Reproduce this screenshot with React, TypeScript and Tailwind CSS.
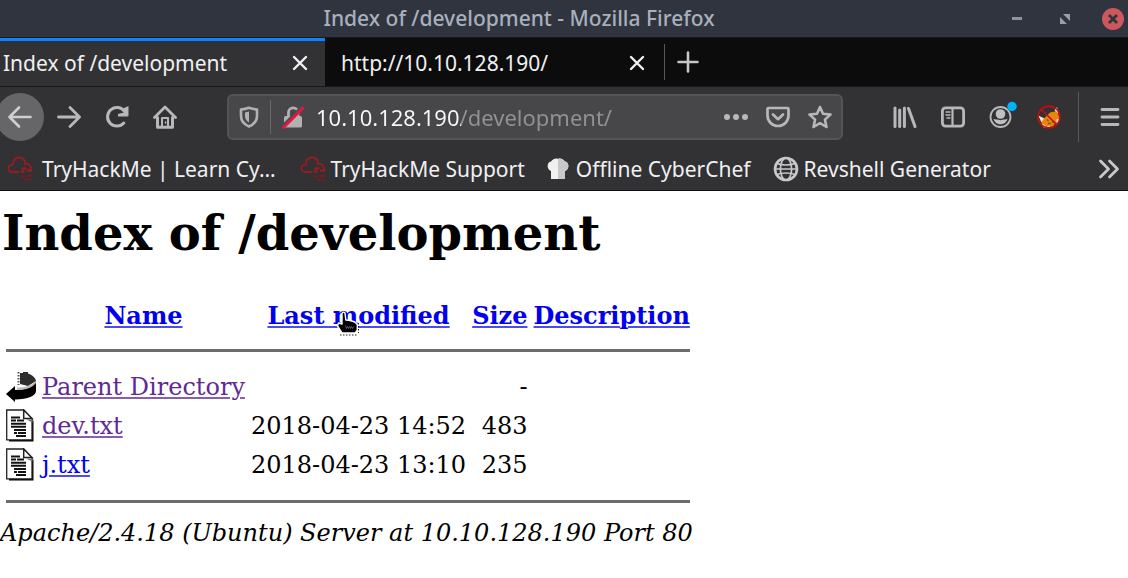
import React from "react";

type IconProps = { className?: string };

function CloseIcon({ className = "" }: IconProps) {
  return (
    <svg viewBox="0 0 16 16" className={`size-4 ${className}`} fill="none" stroke="currentColor" strokeWidth="2.4" strokeLinecap="round" aria-hidden="true">
      <path d="M2 2l12 12M14 2L2 14" />
    </svg>
  );
}

function BackIcon() {
  return (
    <svg viewBox="0 0 24 24" className="size-6" fill="none" stroke="currentColor" strokeWidth="2.6" strokeLinecap="round" strokeLinejoin="round" aria-hidden="true">
      <path d="M22.500 12H1.5M11 2.5L1.5 12l9.500 9.500" />
    </svg>
  );
}

function ForwardIcon() {
  return (
    <svg viewBox="0 0 24 24" className="size-6" fill="none" stroke="currentColor" strokeWidth="2.8" strokeLinecap="round" strokeLinejoin="round" aria-hidden="true">
      <path d="M1.500 12h21M13 2.500L22.500 12 13 21.500" />
    </svg>
  );
}

function ReloadIcon() {
  return (
    <svg viewBox="0 0 24 24" className="size-6" fill="none" aria-hidden="true">
      <path d="M19.500 6.500A9.300 9.300 0 1 0 18.800 18" stroke="currentColor" strokeWidth="3" strokeLinecap="round" />
      <path d="M23.500 1v9.500a1 1 0 0 1-1 1H13V9l6-1.500V3z" fill="currentColor" />
    </svg>
  );
}

function HomeIcon() {
  return (
    <svg viewBox="0 0 24 24" className="size-6" fill="none" stroke="currentColor" strokeLinecap="round" strokeLinejoin="round" aria-hidden="true">
      <path d="M1.500 12.500L12 2l10.500 10.500" strokeWidth="2.800" />
      <path d="M4.500 12.500V22.300h15v-9.800" strokeWidth="3" />
      <path d="M9 22v-9h6v9" strokeWidth="2" />
      <path d="M12.600 17v1" strokeWidth="1.600" />
    </svg>
  );
}

function ShieldIcon() {
  return (
    <svg viewBox="0 0 20 22" className="h-[22px] w-5 shrink-0" aria-hidden="true">
      <path d="M2 3.500Q6 3.200 10 1.800 14 3.200 18 3.500V10c0 5-3.500 8.500-8 10.500C5.500 18.500 2 15 2 10z" fill="none" stroke="#b1b1b3" strokeWidth="2.600" strokeLinejoin="round" />
      <path d="M10 5.500v11C7.500 15 6 13 6 10V6.500z" fill="#b1b1b3" />
    </svg>
  );
}

function InsecureIcon() {
  return (
    <svg viewBox="0 0 22 24" className="h-6 w-[22px] shrink-0" fill="none" aria-hidden="true">
      <path d="M6.500 12V7.500a4.700 4.700 0 0 1 9.400 0V12" stroke="#b1b1b3" strokeWidth="2.800" />
      <rect x="2" y="11" width="18" height="11.500" rx="1.500" fill="#b1b1b3" />
      <path d="M1 20.500L20.500 1" stroke="#4a4a4c" strokeWidth="2.500" />
      <path d="M1.500 22.500L21 3" stroke="#e6173f" strokeWidth="3" strokeLinecap="round" />
    </svg>
  );
}

function DotsIcon() {
  return (
    <svg viewBox="0 0 24 6" className="h-[6px] w-6" fill="currentColor" aria-hidden="true">
      <circle cx="3" cy="3" r="3" />
      <circle cx="12" cy="3" r="3" />
      <circle cx="21" cy="3" r="3" />
    </svg>
  );
}

function PocketIcon() {
  return (
    <svg viewBox="0 0 24 22" className="h-[22px] w-6" fill="none" stroke="currentColor" strokeWidth="2.700" strokeLinecap="round" strokeLinejoin="round" aria-hidden="true">
      <path d="M2.500 2h19a1 1 0 0 1 1 1v6.500a10.500 10.500 0 0 1-21 0V3a1 1 0 0 1 1-1z" />
      <path d="M7 8.500l5 4.700 5-4.700" />
    </svg>
  );
}

function StarIcon() {
  return (
    <svg viewBox="0 0 24 24" className="size-6" fill="none" stroke="currentColor" strokeWidth="2.600" strokeLinejoin="round" aria-hidden="true">
      <path d="M12 2l3 6.800 7.500.8-5.600 5 1.600 7.400-6.500-3.800L5.500 22l1.600-7.400-5.600-5 7.500-.8z" />
    </svg>
  );
}

function LibraryIcon() {
  return (
    <svg viewBox="0 0 24 22" className="h-[22px] w-6" stroke="currentColor" strokeWidth="3" strokeLinecap="round" aria-hidden="true">
      <path d="M2 2v18.500M6.700 4v16.500M11.400 2v18.500M15.500 2.500L22 20.500" />
    </svg>
  );
}

function SidebarIcon() {
  return (
    <svg viewBox="0 0 24 22" className="h-[22px] w-6" fill="none" stroke="currentColor" aria-hidden="true">
      <rect x="1.400" y="1.900" width="21.200" height="18.200" rx="3" strokeWidth="2.800" />
      <path d="M11.500 2v18" strokeWidth="2.200" />
      <path d="M5 6h4M5 9h4M6 12h3" strokeWidth="1.300" strokeLinecap="round" />
    </svg>
  );
}

function AccountIcon() {
  return (
    <svg viewBox="0 0 30 28" className="h-7 w-[30px]" aria-hidden="true">
      <circle cx="11.500" cy="16" r="10" fill="none" stroke="#b8b8ba" strokeWidth="1.800" />
      <circle cx="11.500" cy="13" r="4.800" fill="#c0c0c2" />
      <path d="M4.500 17.800c1.500 1.200 3.500.2 5 1 1.300.6 2.700.6 4 0 1.500-.8 3.500.2 5-1-.8 3.300-3.500 5.500-7 5.500s-6.200-2.200-7-5.500z" fill="#c0c0c2" />
      <circle cx="23" cy="5.500" r="4.700" fill="#00b3ff" />
    </svg>
  );
}

function FoxIcon() {
  return (
    <svg viewBox="0 0 24 24" className="size-6" fill="none" aria-hidden="true">
      <path d="M2 12l5.500 1L13 7.500l5-1L19.500 3 21 9l2 5-5 4.500-3 4-6 .5-4-4z" fill="#e8860c" />
      <path d="M1.500 10.500l5.500 3-2.500 3.500zM17.500 5L20 2l1.500 6.500zM19.500 14.500l3.500-1-3.500 6.500zM5 18.500l4.500 3 4-1-2 2.500-5-.500z" fill="#f1eee8" />
      <path d="M10 14.500l1.500 1.500M15 17h3M11 18.500h3" stroke="#7a5430" strokeWidth="1.400" />
      <circle cx="12" cy="12" r="10.900" stroke="#c40d0d" strokeWidth="1.600" />
      <path d="M4.500 4.500l15 15" stroke="#c40d0d" strokeWidth="1.600" />
    </svg>
  );
}

function CloudIcon() {
  return (
    <svg viewBox="0 0 26 26" className="size-[26px] shrink-0" fill="none" stroke="#961d20" strokeWidth="1.800" strokeLinecap="round" aria-hidden="true">
      <path d="M11.500 16H5.500C-.5 15.500.5 8.500 5.500 9 6 3.500 9 1.500 12 1.500c3.500 0 6 2.200 6 6.500 4-.500 6.500 1.500 6 6" />
      <path d="M15.500 12.500h3M14.500 15.500h2M21 14.500h3" strokeWidth="2.400" />
      <path d="M14 20.500h4M21 20h4M18 23.500h3M23 24h1" stroke="#701f23" />
    </svg>
  );
}

function ChefHatIcon() {
  return (
    <svg viewBox="0 0 22 22" className="size-[22px] shrink-0" aria-hidden="true">
      <path d="M4 21v-8C-.5 12-.5 4 4 3.500 6 .8 9 0 11 1c2-1 5-.2 7 2.500 4.500.5 4.500 8.500 0 9.500v8z" fill="#f0f0f0" />
      <path d="M11 1c2-1 5-.2 7 2.500 4.500.5 4.500 8.500 0 9.500v8h-7z" fill="#c8c8c8" />
    </svg>
  );
}

function GlobeIcon() {
  return (
    <svg viewBox="0 0 26 26" className="size-[26px] shrink-0" fill="none" stroke="#c9c9cb" aria-hidden="true">
      <circle cx="13" cy="13" r="11" strokeWidth="2.600" />
      <ellipse cx="13" cy="13" rx="5.600" ry="11" strokeWidth="1.700" />
      <path d="M2 13h22M4 7.500c5 2 13 2 18 0M4 18.500c5-2 13-2 18 0" strokeWidth="1.700" />
    </svg>
  );
}

function ParentIcon() {
  return (
    <svg viewBox="0 0 30 30" className="h-[30px] w-[30px]" aria-hidden="true">
      <path d="M14 1h3V0h5v1.500c4 1.500 7.500 4 8 7.500l-8 5-8-2z" fill="#2e2e2e" />
      <path d="M30 9v10c0 5-8 8-21 8.500V30L0 22l9-8v4c10 0 18-3 21-9z" fill="#000" />
      <path d="M11 15.500c8 .5 15-2 18.500-6.500l.5 2c-3.500 4.500-10 7-18.500 7z" fill="#bbb" />
      <path d="M12.500 0v13" stroke="#555" strokeWidth="2" strokeDasharray="1.500 1.500" />
    </svg>
  );
}

function TextFileIcon() {
  return (
    <svg viewBox="0 0 28 33" className="h-[33px] w-7" fill="none" aria-hidden="true">
      <path d="M3 32.500h24.500V12L26 10v20.500H3z" fill="#000" />
      <path d="M.7 1h17L26 10v20.800H.7z" fill="#fff" stroke="#222" strokeWidth="1.300" />
      <path d="M17.700 1v8.500H26z" fill="#fff" stroke="#222" strokeWidth="1.500" />
      <path d="M20 10.500h6.500v3z" fill="#777" />
      <path d="M5 8.500h9M5 11.500h5M11 11.500h7M5 14.700h15M5 17.800h15M8 21h12M8 24h3M12 24h8M10 27h10" stroke="#111" strokeWidth="1.900" />
    </svg>
  );
}

function HandCursor() {
  return (
    <svg viewBox="0 0 24 26" className="pointer-events-none absolute top-[10px] left-[86px] h-[26px] w-6" aria-hidden="true">
      <path d="M6 2.500Q7 0 9 2l.8 7 3 .3 3 .7 3 1 2.500 2.500V19l-2 3H6l-4.500-7 1-3 3.500 1z" fill="#000" stroke="#fff" strokeWidth="1.400" strokeLinejoin="round" />
      <path d="M9.500 14.500l1 3 1-2 1 2 1-2 1 2 1-2 1 2 1-2" fill="none" stroke="#777" strokeWidth=".8" />
      <path d="M4 24h17M22.500 12v10" stroke="#222" strokeWidth="1" strokeDasharray="1.500 1.500" />
    </svg>
  );
}

const bookmarks = [
  { label: "TryHackMe | Learn Cy…", icon: <CloudIcon />, style: "gap-[9px] mr-6" },
  { label: "TryHackMe Support", icon: <CloudIcon />, style: "gap-[5px] mr-[22px]" },
  { label: "Offline CyberChef", icon: <ChefHatIcon />, style: "gap-[7px] mr-[22px]" },
  { label: "Revshell Generator", icon: <GlobeIcon />, style: "gap-[5px]" },
];

const files = [
  { name: "dev.txt", modified: "2018-04-23 14:52", size: "483", visited: true },
  { name: "j.txt", modified: "2018-04-23 13:10", size: "235", visited: false },
];

const blueLink = "text-[#0000ee] underline decoration-[#0000ee]/70 decoration-2 underline-offset-2";
const visitedLink = "text-[#5f2a93] underline decoration-[#551a8b]/70 decoration-2 underline-offset-2";

function TitleBar() {
  return (
    <header className="relative flex h-[37px] items-center justify-end bg-[#2f343f] pr-1">
      <h2 className="absolute inset-x-0 pr-[90px] text-center text-[21px] leading-[37px] font-medium text-[#a9b0bd]">
        Index of /development - Mozilla Firefox
      </h2>
      <div className="relative flex items-center">
        <button aria-label="Minimize" className="mr-[38px] h-[3px] w-[10px] bg-[#8f949e]" />
        <button aria-label="Restore" className="mr-8">
          <svg viewBox="0 0 10 10" className="size-[10px]" fill="#9a9ea8" aria-hidden="true">
            <path d="M3 0h7v7zM0 3v7h7z" />
          </svg>
        </button>
        <button aria-label="Close window" className="flex size-[22px] items-center justify-center rounded-full bg-[#cc575d] text-[#2f343f]">
          <svg viewBox="0 0 10 10" className="size-[10px]" stroke="currentColor" strokeWidth="2.800" aria-hidden="true">
            <path d="M1 1l8 8M9 1L1 9" />
          </svg>
        </button>
      </div>
    </header>
  );
}

function TabStrip() {
  return (
    <div className="flex h-[50px] border-y border-[#17181b] bg-[#0c0c0d] text-[21px] leading-7 text-[#f0f0f2]">
      <div className="flex w-[325px] shrink-0 items-center border-t-[3px] border-[#0a84ff] bg-[#323234] pr-[17px] pb-[2px] pl-[3px]">
        <button className="flex-1 text-left">Index of /development</button>
        <button aria-label="Close tab Index of /development"><CloseIcon /></button>
      </div>
      <div className="flex w-[339px] shrink-0 items-center pt-px pr-[19px] pl-4">
        <button className="flex-1 text-left">http://10.10.128.190/</button>
        <button aria-label="Close tab 10.10.128.190"><CloseIcon /></button>
      </div>
      <div className="my-[6px] border-l border-[#57575a]" />
      <button aria-label="New tab" className="ml-3 self-center text-[#c6c6c8]">
        <svg viewBox="0 0 22 22" className="size-[22px]" stroke="currentColor" strokeWidth="2.600" strokeLinecap="round" aria-hidden="true">
          <path d="M11 1.500v19M1.500 11h19" />
        </svg>
      </button>
    </div>
  );
}

function Toolbar() {
  return (
    <nav aria-label="Navigation" className="flex h-[60px] items-center bg-[#323234] pr-2 text-[#b8b8ba]">
      <div className="flex w-[227px] shrink-0 items-center">
        <button aria-label="Back" className="-ml-1 flex size-12 items-center justify-center rounded-full bg-[#666668] text-[#cfcfd1]"><BackIcon /></button>
        <button aria-label="Forward" className="ml-[13px]"><ForwardIcon /></button>
        <button aria-label="Reload" className="ml-6"><ReloadIcon /></button>
        <button aria-label="Home" className="ml-6"><HomeIcon /></button>
      </div>
      <div className="flex h-[46px] min-w-0 flex-1 items-center rounded-md border-2 border-[#545456] bg-[#474749] pr-[9px] pl-[10px]">
        <ShieldIcon />
        <div className="mx-[11px] h-[34px] border-l border-[#66686c]" />
        <InsecureIcon />
        <input
          aria-label="Address"
          defaultValue="10.10.128.190/development/"
          spellCheck={false}
          className="ml-3 min-w-0 flex-1 bg-[linear-gradient(90deg,#f9f9fa_145px,#929294_145px)] bg-clip-text text-[22px] text-transparent outline-none"
        />
        <button aria-label="Page actions" className="mr-[18px]"><DotsIcon /></button>
        <button aria-label="Save to Pocket" className="mr-[18px]"><PocketIcon /></button>
        <button aria-label="Bookmark this page"><StarIcon /></button>
      </div>
      <div className="ml-[50px] flex items-center">
        <button aria-label="Library" className="mr-6"><LibraryIcon /></button>
        <button aria-label="Sidebars" className="mr-6"><SidebarIcon /></button>
        <button aria-label="Account" className="mr-[18px] pb-[5px]"><AccountIcon /></button>
        <button aria-label="Proxy extension"><FoxIcon /></button>
        <div className="mr-[21px] ml-[17px] h-[50px] border-l border-[#59595b]" />
        <button aria-label="Menu">
          <svg viewBox="0 0 20 20" className="size-5" stroke="currentColor" strokeWidth="2.800" strokeLinecap="round" aria-hidden="true">
            <path d="M2 2.500h16M2 10h16M2 17.500h16" />
          </svg>
        </button>
      </div>
    </nav>
  );
}

function Bookmarks() {
  return (
    <nav aria-label="Bookmarks" className="flex h-11 items-center border-b border-[#0f0f10] bg-[#323234] pr-2 pl-[7px] text-[21px] leading-7 whitespace-nowrap text-[#f0f0f2]">
      {bookmarks.map((b) => (
        <a key={b.label} href="#" className={`flex shrink-0 items-center ${b.style}`}>
          {b.icon}
          {b.label}
        </a>
      ))}
      <button aria-label="More bookmarks" className="ml-auto text-[#c9c9cb]">
        <svg viewBox="0 0 22 20" className="h-5 w-[22px]" fill="none" stroke="currentColor" strokeWidth="2.800" strokeLinecap="round" strokeLinejoin="round" aria-hidden="true">
          <path d="M2.500 2l8 8-8 8M11.500 2l8 8-8 8" />
        </svg>
      </button>
    </nav>
  );
}

function RuleRow() {
  return (
    <tr>
      <td colSpan={5} className="px-px py-[14px]">
        <hr className="border-t-[3px] border-[#6c6c6c]" />
      </td>
    </tr>
  );
}

export default function App() {
  return (
    <div className="min-h-screen overflow-hidden bg-white font-['Noto_Sans','Open_Sans',sans-serif]">
      <TitleBar />
      <TabStrip />
      <Toolbar />
      <Bookmarks />
      <main className="pb-6 font-['DejaVu_Serif',serif] text-2xl leading-7 text-black">
        <h1 className="pt-[14px] pl-[2px] text-5xl leading-14 font-bold">Index of /development</h1>
        <table className="mt-9 ml-px border-separate border-spacing-1">
          <thead>
            <tr>
              <td className="w-8" />
              <th scope="col" className="p-px"><a href="#" className={blueLink}>Name</a></th>
              <th scope="col" className="relative p-px"><a href="#" className={blueLink}>Last modified</a><HandCursor /></th>
              <th scope="col" className="p-px"><a href="#" className={blueLink}>Size</a></th>
              <th scope="col" className="p-px"><a href="#" className={blueLink}>Description</a></th>
            </tr>
          </thead>
          <tbody>
            <RuleRow />
            <tr>
              <td className="px-px py-[2px]"><ParentIcon /></td>
              <td className="p-px"><a href="#" className={visitedLink}>Parent Directory</a></td>
              <td />
              <td className="p-px text-right">-</td>
              <td />
            </tr>
            {files.map((f) => (
              <tr key={f.name}>
                <td className="p-px"><TextFileIcon /></td>
                <td className="p-px">
                  <a href="#" className={f.visited ? visitedLink : blueLink}>{f.name}</a>
                </td>
                <td className="p-px text-right">{f.modified}</td>
                <td className="p-px text-right">{f.size}</td>
                <td />
              </tr>
            ))}
            <RuleRow />
          </tbody>
        </table>
        <address className="leading-6 italic">Apache/2.4.18 (Ubuntu) Server at 10.10.128.190 Port 80</address>
      </main>
    </div>
  );
}
